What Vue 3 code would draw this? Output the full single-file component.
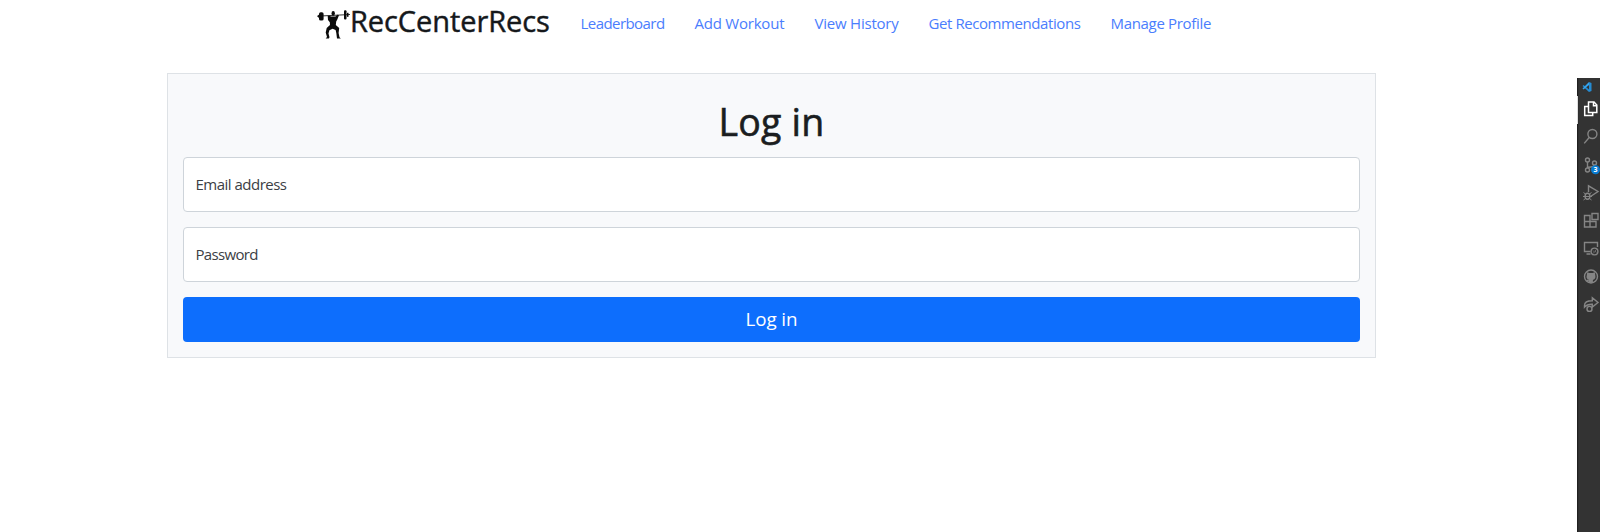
<script setup>
const links = [
  { label: 'Leaderboard', id: 'leaderboard' },
  { label: 'Add Workout', id: 'workout' },
  { label: 'View History', id: 'history' },
  { label: 'Get Recommendations', id: 'recommendations' },
  { label: 'Manage Profile', id: 'profile' },
]
</script>

<template>
  <div class="page">
    <main class="content">
      <header class="navbar">
        <a class="brand">
          <svg class="lifter" viewBox="0 0 33 29" width="33" height="29">
            <path d="M0 6.2L33 4.5" stroke="#333" stroke-width="1" />
            <g fill="#0b0b0b">
              <rect x="2" y="2.2" width="4.6" height="8.4" rx="1.7" />
              <rect x="1" y="4.8" width="2.2" height="3" rx="1" />
              <rect x="27" y="0.2" width="2.5" height="9.3" rx="1" />
              <rect x="30" y="2.8" width="1.5" height="4" />
              <ellipse cx="16.2" cy="3.4" rx="1.7" ry="2.4" />
              <path d="M10.7 5.8L12.6 5.8L14 6.6H18.5L20.3 4.8L22 5.2L20.3 9.5L19.2 11.5L18.8 15L22.2 18L21.6 23L22.5 27.3L23.8 28.6H20L19.3 23L18.6 20L15.6 18.8L12.4 20.2L11.5 23.4L12.5 27.2L11.8 28.6H8.7L10 27L8.7 22.6L9.7 18L13 15L12.8 12.3L11 10Z" />
            </g>
          </svg>
          <span>RecCenterRecs</span>
        </a>
        <nav>
          <a v-for="link in links" :key="link.id" :class="link.id">{{ link.label }}</a>
        </nav>
      </header>

      <form class="card" @submit.prevent>
        <h1>Log in</h1>
        <label class="field"><span class="email">Email address</span></label>
        <label class="field"><span class="password">Password</span></label>
        <button type="submit">Log in</button>
      </form>
    </main>

    <aside class="activity">
      <svg viewBox="-.5 0 23 454" width="23" height="454" fill="none" stroke="#858585" stroke-width="1.4">
        <path d="M0 0V454" stroke="#202020" />
        <path d="M0 18V46" stroke="#ddd" stroke-width="1" />
        <g stroke="none">
          <path d="M11.5 4L14 5V13L11.5 14L5 8L6 7L11.5 11.5Z" fill="#258bd2" />
          <path d="M11.5 4V7L6 11.5L5 10.5Z" fill="#36a4ed" />
        </g>
        <g stroke="#fff" stroke-width="1.5">
          <path d="M11 24H16.5L19.3 27V34.5H11Z" />
          <path d="M16 24V27.7H19.3M11 28.5H7.2V37.5H15.2V35" />
        </g>
        <circle cx="14.9" cy="56" r="4.5" />
        <path d="M11.9 59.2L6.7 65.4" />
        <g>
          <circle cx="10" cy="82" r="2" />
          <circle cx="10" cy="92" r="2" />
          <circle cx="17" cy="85" r="2" />
          <path d="M10 84V90M17 87Q16.5 89 13.5 89Q10.5 89 10 90" />
        </g>
        <circle cx="18" cy="91.7" r="4.5" fill="#087bd0" stroke="none" />
        <path d="M11 114V107.8L20.5 113.5L13 118.5" />
        <ellipse cx="10" cy="118.3" rx="2.4" ry="3" />
        <path d="M6 114.5L8 116M14 114.5L12 116M5.5 118.5H14.5M6 122L8 120.5M14 122L12 120.5" stroke-width="1" />
        <path d="M7 137.5H12.5V149H7ZM7 143.5H18.5V149H12.5M14.5 135.5H20.5V141.5H14.5Z" />
        <path d="M13 173.5H7V164.5H20V169M9 176H13" />
        <circle cx="17" cy="173.5" r="3.4" />
        <path d="M15.5 172.5L17 174L15.5 175.5M18.8 171.5L17.5 173L18.8 174.5" stroke-width=".7" />
        <circle cx="13.5" cy="198.5" r="6.5" />
        <path d="M9.7 194.3L11.9 195H15.1L17.3 194.3L17.7 196.5Q18.7 201 15.4 202V204.7H11.5V202Q8.2 201 9.4 196.5Z" fill="#858585" stroke="none" />
        <path d="M9.2 202L11.5 203.2" />
        <path d="M7 227.5Q7 222.8 14.8 222.8V219.8L20.5 224.5L14.8 229V226.2Q9.5 226 7 229Z" />
        <circle cx="12" cy="230.9" r="2.5" />
      </svg>
      <span class="count">3</span>
    </aside>
  </div>
</template>

<style>
body { margin: 0; background: #fff; }
</style>

<style scoped>
* { box-sizing: border-box; }
.page {
  height: 532px;
  display: flex;
  justify-content: space-between;
  overflow: hidden;
  font-family: "Open Sans", "Noto Sans", sans-serif;
  color: #212529;
}
.content { width: 1209px; margin-left: 167px; }
.navbar { height: 73px; display: flex; padding-left: 150px; }
.brand { width: 263.5px; display: flex; white-space: nowrap; color: #15181b; }
.lifter { margin-top: 10px; flex: none; }
.brand span { font-size: 29px; line-height: 40px; font-weight: 500; letter-spacing: -.07px; margin-top: 1px; -webkit-text-stroke: .45px currentColor; }
nav { display: grid; grid-template-columns: 84px 90px 84px 152px 102px; gap: 30px; align-self: flex-start; padding-top: 12px; }
nav a { color: #4a7dfd; font-size: 15px; line-height: 23px; white-space: nowrap; font-weight: 400; letter-spacing: -.42px; }
.leaderboard { letter-spacing: -.56px; }
.workout, .history { letter-spacing: -.22px; }
.profile { letter-spacing: -.32px; }
.card { height: 285px; border: 1px solid #dee2e6; background: #f8f9fb; padding: 22px 15px 15px; }
h1 { margin: 0; height: 61px; font-size: 37.5px; line-height: 51px; font-weight: 500; text-align: center; color: #1a1d20; letter-spacing: .2px; -webkit-text-stroke: .6px currentColor; }
.field { height: 55px; border: 1px solid #ced4da; border-radius: 4px; background: #fff; display: flex; align-items: center; padding: 0 0 2px 11.5px; margin-bottom: 15px; font-size: 15px; font-weight: 400; color: #3c4044; }
.email { letter-spacing: -.51px; }
.password { letter-spacing: -.68px; }
button { display: block; width: 100%; height: 45px; border: 0; border-radius: 4px; padding: 0 0 1px; background: #0d6efd; color: #fff; font: 400 18.8px "Open Sans", "Noto Sans", sans-serif; letter-spacing: -.1px; }
.activity { position: relative; width: 23px; height: 454px; margin-top: 78px; background: #333; }
.activity svg { display: block; }
.count { position: absolute; left: 16.5px; top: 87px; color: #fff; font-size: 7px; line-height: 9px; font-weight: 700; }
</style>
